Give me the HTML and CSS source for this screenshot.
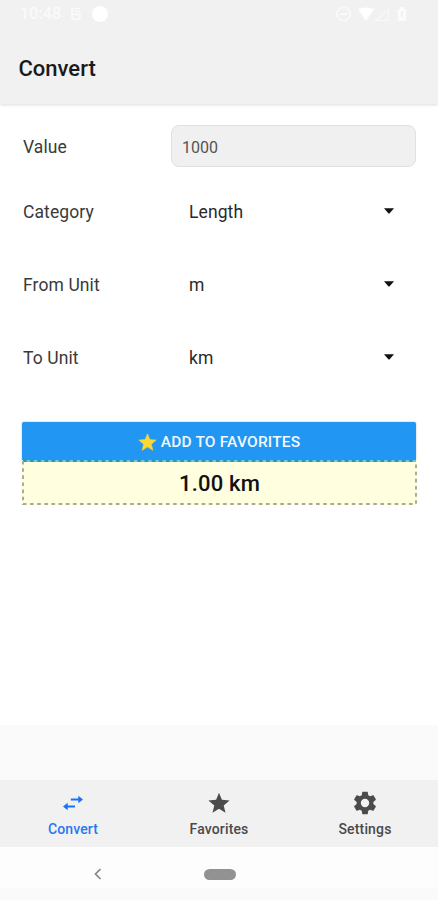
FILE: index.html
```
<!DOCTYPE html>
<html lang="en">
<head>
<meta charset="utf-8">
<title>Convert</title>
<link rel="stylesheet" href="styles.css">
</head>
<body>
<div class="app">
  <header class="header">
    <div class="status">
      <span class="clock">10:48</span>
      <svg class="status-note" width="12" height="14" viewBox="0 0 12 14" fill="none" stroke="#fafafa" stroke-width="1.6"><path d="M10 1.500H4.500Q2 1.500 2 4v6q0 2.500 2.500 2.500h3Q10 12.500 10 10V7.500H2M5 4.500h5"/></svg>
      <span class="status-dot"></span>
      <svg class="status-right" width="76" height="18" viewBox="0 0 76 18">
        <circle cx="8.500" cy="9" r="6.700" fill="none" stroke="#f9f9f9" stroke-width="1.800"/>
        <path d="M5 9h7" stroke="#fafafa" stroke-width="2"/>
        <path d="M23 4q8-3 16 0l-8 12z" fill="#fff"/>
        <path d="M41 15.500L53.500 4v11.500z" fill="none" stroke="#f8f8f8" stroke-width="1.300"/>
        <path d="M63 4h2V2h4v2h2v12h-8z" fill="#fbfbfb"/>
        <path d="M67 6v6" stroke="#efefef" stroke-width="1.500"/>
      </svg>
    </div>
    <h1 class="title">Convert</h1>
  </header>

  <main class="content">
    <div class="row row-value"><label class="label" for="value">Value</label><input class="input" id="value" value="1000"></div>
    <div class="row"><span class="label">Category</span><div class="picker"><span>Length</span><svg class="caret" width="10" height="6" viewBox="0 0 10 6"><path d="M0 .3h10L5.700 5.300q-.7.6-1.400 0z" fill="#111"/></svg></div></div>
    <div class="row"><span class="label">From Unit</span><div class="picker"><span>m</span><svg class="caret" width="10" height="6" viewBox="0 0 10 6"><path d="M0 .3h10L5.700 5.300q-.7.6-1.400 0z" fill="#111"/></svg></div></div>
    <div class="row"><span class="label">To Unit</span><div class="picker"><span>km</span><svg class="caret" width="10" height="6" viewBox="0 0 10 6"><path d="M0 .3h10L5.700 5.300q-.7.6-1.400 0z" fill="#111"/></svg></div></div>

    <button class="favorite">
      <svg width="19" height="18" viewBox="0 0 19 18"><path d="M9.500.7l2.500 5.800 6.300.5-4.800 4.200 1.500 6.200-5.500-3.300L4 17.400l1.500-6.200L.7 7 7 6.500z" fill="#fdd835" stroke="#e9c638" stroke-width=".6" stroke-linejoin="round"/></svg>
      <span>ADD TO FAVORITES</span>
    </button>
    <div class="result">
      <svg class="result-border" width="395" height="45" viewBox="0 0 395 45" fill="none" stroke-width="1.900" stroke-dasharray="3.600 3.550"><path d="M1 1h393" stroke="#75c5dd" stroke-dasharray="none"/><path d="M1 1h393" stroke="#259aa8"/><path d="M1 1v43h393V1" stroke="#a3aa96"/></svg>
      <span>1.00 km</span>
    </div>
  </main>

  <div class="spacer"></div>
  <nav class="tabs">
    <a class="tab active">
      <svg width="24" height="24" viewBox="0 0 24 24" fill="none" stroke="#1a73f5" stroke-width="2.200"><path d="M9.800 8.500H19M14 15.500H5"/><path d="M17.300 4.700l4.700 3.800-4.700 3.800zM6.700 11.700L2 15.500l4.700 3.800z" fill="#1a73f5" stroke="none"/></svg>
      <span>Convert</span>
    </a>
    <a class="tab">
      <svg width="26" height="24" viewBox="0 0 26 24"><path d="M13 1.700l2.900 7.100 7.700.6-5.900 5 1.800 7.400-6.500-4-6.500 4 1.800-7.400-5.900-5 7.700-.6z" fill="#4b4b4b"/></svg>
      <span>Favorites</span>
    </a>
    <a class="tab">
      <svg width="28" height="28" viewBox="0 0 24 24"><path fill="#4b4b4b" d="M19.140 12.940c.04-.3.060-.61.060-.94 0-.32-.02-.64-.07-.94l2.030-1.580c.18-.14.23-.41.120-.61l-1.920-3.320c-.12-.22-.37-.29-.59-.22l-2.390.96c-.5-.38-1.030-.7-1.620-.94l-.36-2.540c-.04-.24-.24-.41-.48-.41h-3.840c-.24 0-.43.170-.47.410l-.36 2.540c-.59.240-1.130.570-1.620.94l-2.390-.96c-.22-.08-.47 0-.59.220L2.740 8.870c-.12.210-.08.470.120.610l2.030 1.580c-.05.300-.09.630-.09.940s.02.640.070.940l-2.030 1.580c-.18.140-.23.410-.12.610l1.920 3.320c.12.220.37.290.59.220l2.390-.96c.5.380 1.030.7 1.620.94l.36 2.540c.05.240.24.410.48.410h3.840c.24 0 .44-.17.470-.41l.36-2.540c.59-.24 1.130-.56 1.620-.94l2.390.96c.22.080.47 0 .59-.22l1.920-3.320c.12-.22.070-.47-.12-.61zM12 15.600A3.600 3.600 0 1 1 12 8.400a3.600 3.600 0 0 1 0 7.200z"/></svg>
      <span>Settings</span>
    </a>
  </nav>
  <footer class="system">
    <svg width="10" height="12" viewBox="0 0 10 12"><path d="M7.500 1L2.500 6l5 5" fill="none" stroke="#858585" stroke-width="1.700"/></svg>
    <span class="home"></span>
    <span></span>
  </footer>
  <div class="edge"></div>
</div>
</body>
</html>
```
FILE: styles.css
```
* { box-sizing: border-box; }
body { margin: 0; background: #fff; font-family: Roboto, "Liberation Sans", sans-serif; }
.app { width: 438px; height: 900px; display: flex; flex-direction: column; overflow: hidden; background: #fff; }
.header { height: 104px; flex: none; background: #f1f1f1; box-shadow: 0 1px 3px rgba(0,0,0,.14); }
.status { height: 28px; display: flex; align-items: center; padding: 0 20px; }
.clock { color: #fafafa; font-size: 16px; font-weight: 500; line-height: 28px; width: 50px; letter-spacing: .1px; }
.status-dot { width: 16px; height: 16px; border-radius: 50%; background: #fff; margin-left: 10px; }
.status-right { margin-left: auto; margin-right: 7px; }
.title { margin: 27px 0 0 18.500px; font-size: 22px; line-height: 28px; font-weight: 500; letter-spacing: 0; color: #1a1a1a; }
.content { height: 621px; flex: none; padding: 21px 22px 0 23px; }
.row { height: 73px; display: flex; align-items: center; }
.row-value { height: 42px; margin-bottom: 7px; }
.label { width: 148px; flex: none; font-size: 17.500px; line-height: 24px; color: #3a3a3a; letter-spacing: .1px; padding-top: 2px; }
.input { flex: 1; min-width: 0; height: 42px; border: 1px solid #e0e0e0; border-radius: 8px; background: #f0f0f0; padding: 3px 10px 0; font: 16px Roboto, sans-serif; color: #555; }
.picker { flex: 1; display: flex; align-items: center; justify-content: space-between; padding: 0 22px 0 18px; font-size: 17.500px; line-height: 24px; color: #2a2a2a; letter-spacing: .1px; }
.picker span { padding-top: 2px; }
.caret { margin-top: 0; }
.favorite { width: 394px; height: 39px; margin: 29px 0 0 -1px; padding: 1px 0 0; border: 0; border-radius: 2px 2px 0 0; background: #2196f3; box-shadow: 0 0 2px rgba(0,0,0,.3); display: flex; align-items: center; justify-content: center; gap: 4px; font: 500 15.500px Roboto, sans-serif; letter-spacing: .18px; color: #f2f9ff; }
.result { position: relative; width: 395px; height: 45px; margin: -1px 0 0 -1px; padding-top: 2px; background: #ffffe0; display: flex; align-items: center; justify-content: center; font-size: 22px; font-weight: 500; letter-spacing: .2px; color: #111; }
.result-border { position: absolute; inset: 0; }
.spacer { height: 55px; flex: none; background: #fafafa; }
.tabs { height: 67px; flex: none; background: #f1f1f1; display: grid; grid-template-columns: repeat(3, 1fr); }
.tab { display: grid; grid-template-rows: 28px 20px; padding-top: 9px; justify-items: center; align-items: center; font-size: 14px; font-weight: 500; line-height: 20px; letter-spacing: .15px; color: #4a4a4a; }
.tab span { padding-top: 3px; }
.active { color: #2878f0; }
.system { height: 41px; flex: none; display: grid; grid-template-columns: 195px 49px 194px; align-items: center; justify-items: center; background: #fdfdfd; padding-top: 13px; }
.home { width: 32px; height: 11px; border-radius: 6px; background: #929292; }
.edge { flex: 1; background: #fafafa; }
```
